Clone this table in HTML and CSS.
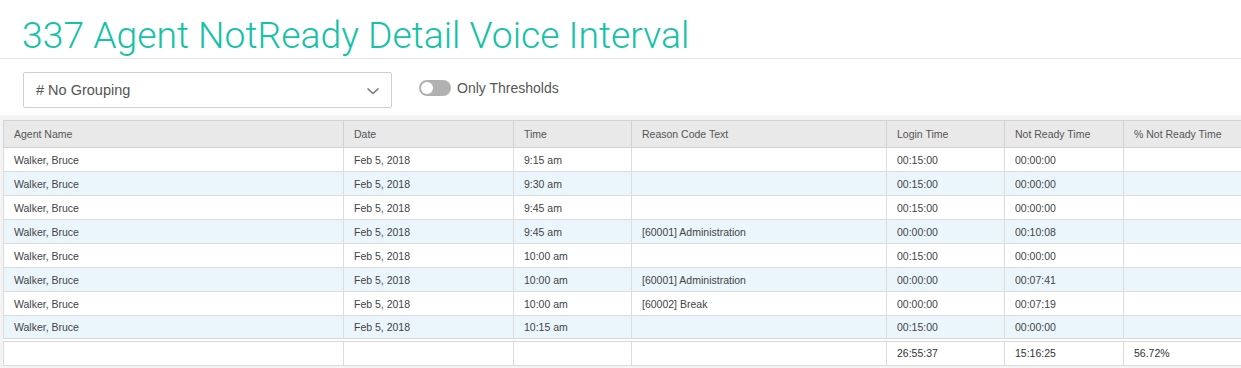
FILE: index.html
```html
<!DOCTYPE html>
<html lang="en">
<head>
<meta charset="utf-8">
<title>337 Agent NotReady Detail Voice Interval</title>
<link rel="stylesheet" href="styles.css">
</head>
<body>
<header class="page-header">
  <h1 class="title">337 Agent NotReady Detail Voice Interval</h1>
</header>
<div class="toolbar">
  <div class="select">
    <span class="select-label"># No Grouping</span>
    <svg class="chevron" width="14" height="8" viewBox="0 0 14 8"><polyline points="1.5,1.5 7,6.5 12.5,1.5" fill="none" stroke="#777" stroke-width="1.6"/></svg>
  </div>
  <label class="toggle">
    <span class="switch"><span class="knob"></span></span>
    <span class="toggle-label">Only Thresholds</span>
  </label>
</div>
<div class="grid-area">
  <table class="grid">
    <colgroup>
      <col class="c1"><col class="c2"><col class="c3"><col class="c4"><col class="c5"><col class="c6"><col class="c7">
    </colgroup>
    <thead>
      <tr><th>Agent Name</th><th>Date</th><th>Time</th><th>Reason Code Text</th><th>Login Time</th><th>Not Ready Time</th><th>% Not Ready Time</th></tr>
    </thead>
    <tbody>
      <tr><td>Walker, Bruce</td><td>Feb 5, 2018</td><td>9:15 am</td><td></td><td>00:15:00</td><td>00:00:00</td><td></td></tr>
      <tr class="alt"><td>Walker, Bruce</td><td>Feb 5, 2018</td><td>9:30 am</td><td></td><td>00:15:00</td><td>00:00:00</td><td></td></tr>
      <tr><td>Walker, Bruce</td><td>Feb 5, 2018</td><td>9:45 am</td><td></td><td>00:15:00</td><td>00:00:00</td><td></td></tr>
      <tr class="alt"><td>Walker, Bruce</td><td>Feb 5, 2018</td><td>9:45 am</td><td>[60001] Administration</td><td>00:00:00</td><td>00:10:08</td><td></td></tr>
      <tr><td>Walker, Bruce</td><td>Feb 5, 2018</td><td>10:00 am</td><td></td><td>00:15:00</td><td>00:00:00</td><td></td></tr>
      <tr class="alt"><td>Walker, Bruce</td><td>Feb 5, 2018</td><td>10:00 am</td><td>[60001] Administration</td><td>00:00:00</td><td>00:07:41</td><td></td></tr>
      <tr><td>Walker, Bruce</td><td>Feb 5, 2018</td><td>10:00 am</td><td>[60002] Break</td><td>00:00:00</td><td>00:07:19</td><td></td></tr>
      <tr class="alt"><td>Walker, Bruce</td><td>Feb 5, 2018</td><td>10:15 am</td><td></td><td>00:15:00</td><td>00:00:00</td><td></td></tr>
    </tbody>
    <tfoot>
      <tr><td></td><td></td><td></td><td></td><td>26:55:37</td><td>15:16:25</td><td>56.72%</td></tr>
    </tfoot>
  </table>
</div>
</body>
</html>
```
FILE: styles.css
```css
html, body {
  margin: 0;
  padding: 0;
  background: #fff;
}
body {
  width: 1241px;
  height: 368px;
  overflow: hidden;
  font-family: "Liberation Sans", Arial, sans-serif;
  color: #444;
}
.page-header {
  height: 59px;
  border-bottom: 1px solid #e6e6e6;
  box-sizing: border-box;
  padding: 0 0 0 22px;
}
.title {
  margin: 0;
  padding-top: 14px;
  font-family: Roboto, "Liberation Sans", sans-serif;
  font-weight: 300;
  font-size: 37.3px;
  line-height: 42px;
  color: #14c2a8;
  white-space: nowrap;
}
.toolbar {
  display: flex;
  align-items: center;
  gap: 27px;
  height: 56px;
  padding: 0 0 0 23px;
  box-sizing: border-box;
}
.select {
  width: 369px;
  height: 36px;
  box-sizing: border-box;
  border: 1px solid #cfcfcf;
  border-radius: 2px;
  display: flex;
  align-items: center;
  justify-content: space-between;
  padding: 0 11px 0 12px;
  margin-top: 6px;
}
.select-label {
  font-size: 14.5px;
  color: #555;
}
.chevron {
  display: block;
  margin-top: 1px;
}
.toggle {
  display: flex;
  align-items: center;
  gap: 6px;
  margin-top: 1px;
}
.switch {
  width: 32px;
  height: 16px;
  border-radius: 8px;
  background: #b1b1b1;
  display: flex;
  align-items: center;
  padding: 0 2px;
  box-sizing: border-box;
}
.knob {
  width: 12px;
  height: 12px;
  border-radius: 50%;
  background: #fff;
}
.toggle-label {
  font-size: 14px;
  color: #555;
}
.grid-area {
  background: #f4f4f4;
  padding: 5px 0 0 3px;
  height: 253px;
  box-sizing: border-box;
}
.grid {
  border-collapse: collapse;
  table-layout: fixed;
  width: 1250px;
  background: #fff;
  font-size: 10.5px;
}
.c1 { width: 340px; }
.c2 { width: 170px; }
.c3 { width: 118px; }
.c4 { width: 255px; }
.c5 { width: 118px; }
.c6 { width: 119px; }
.c7 { width: 130px; }
.grid th,
.grid td {
  border: 1px solid #dcdcdc;
  padding: 0 10px;
  text-align: left;
  white-space: nowrap;
  overflow: hidden;
  box-sizing: border-box;
}
.grid th {
  height: 27px;
  background: #e9e9e9;
  font-weight: normal;
  color: #555;
  border-color: #d2d2d2;
}
.grid td {
  height: 24px;
  color: #444;
}
.grid tr.alt td {
  background: #eaf6fc;
}
.grid tfoot td {
  border-top: 4px double #d8d8d8;
  height: 26px;
  color: #333;
}
```
